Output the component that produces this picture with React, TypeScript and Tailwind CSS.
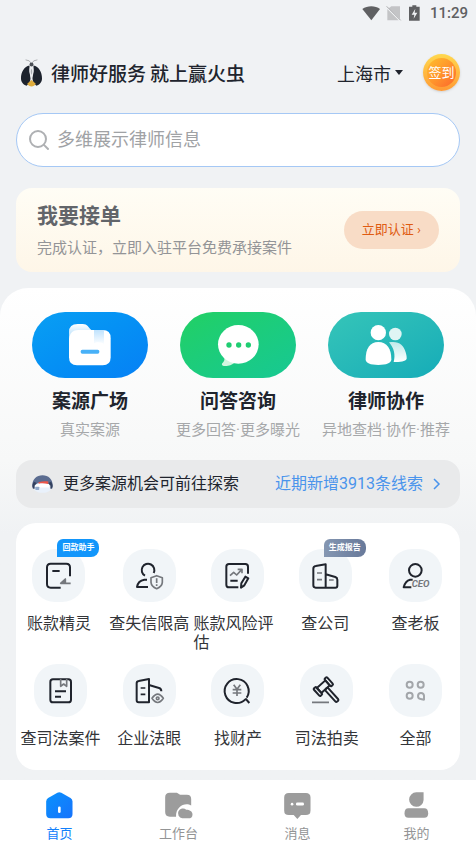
import type { ReactNode } from "react";

const INK = "#20242d";
const GREY = "#75787d";

/* ---------- small drawings ---------- */

function FireflyLogo() {
  return (
    <svg viewBox="0 0 70 90" className="h-[30px] w-[23px] shrink-0" aria-hidden="true">
      <path d="M35 17 28 8 17 5M35 17 42 8 53 5" fill="none" stroke="#8b8d90" strokeWidth="2" />
      <path d="M29 22C13 25 3 42 3 61c0 12 7 19 17 23 7-6 12-13 12-22 0-12-4-20-3-40z" fill="#1d232d" />
      <path d="M41 22c16 3 26 20 26 39 0 12-7 19-17 23-7-6-12-13-12-22 0-12 4-20 3-40z" fill="#1d232d" />
      <path d="M35 22c-7 5-8 16-5 27l5 16 5-16c3-11 2-22-5-27z" fill="#eceef0" />
      <path d="M35 32c-3 5-3 12 0 19 3-7 3-14 0-19z" fill="#a9adb2" />
      <circle cx="35" cy="19" r="6" fill="#4b4f55" />
      <path d="M22 78 35 66l13 12c-2 5-8 8-13 8s-11-3-13-8z" fill="#dfac3c" />
    </svg>
  );
}

function StatusIcons() {
  return (
    <svg viewBox="0 0 180 48" className="h-4 w-[60px]" aria-hidden="true">
      <path d="M1 12C16 1 40 1 54 12L28 46z" fill="#5f6062" />
      <path d="M88 4h26v38L80 10zM76 12l34 34H76z" fill="#c3c4c6" />
      <path d="m74 4 42 42" stroke="#a7a8aa" strokeWidth="3" />
      <path d="M151 1h12v4h10v42h-32V5h10z" fill="#5f6062" />
      <path d="m160 11-11 18h8l-2 12 11-18h-8z" fill="#f0f2f4" />
    </svg>
  );
}

function FolderArt() {
  return (
    <svg viewBox="0 0 348 198" className="h-[66px] w-[116px]" aria-hidden="true">
      <defs>
        <linearGradient id="folderTab" x1="0" y1="0" x2="0" y2="1">
          <stop offset="0" stopColor="#fff" />
          <stop offset="1" stopColor="#a9dafb" />
        </linearGradient>
        <linearGradient id="folderStrip" x1="0" y1="0" x2="0" y2="1">
          <stop offset="0" stopColor="#bfe2fd" />
          <stop offset="1" stopColor="#fff" />
        </linearGradient>
      </defs>
      <path d="M111 80V60q0-24 26-24h15c15 0 17 10 26 18l-20 26z" fill="url(#folderTab)" />
      <path d="M111 80c3-18 12-26 28-26h73q24 0 24 24v58q0 24-24 24h-77q-24 0-24-24z" fill="#fff" />
      <path d="M186 54h30v44c-5-9-22-9-30-4z" fill="url(#folderStrip)" />
      <rect x="146" y="113" width="56" height="12" rx="5" fill="#48b1f8" />
    </svg>
  );
}

function ChatArt() {
  return (
    <svg viewBox="0 0 348 198" className="h-[66px] w-[116px]" aria-hidden="true">
      <path d="M132 135c4 10-2 15-6 20-3 7 9 8 18 6 10-2 17-6 22-12z" fill="#d3f6e0" />
      <ellipse cx="175" cy="97" rx="61" ry="58" fill="#fff" />
      <g fill="#1fcd72">
        <circle cx="147" cy="99" r="8" />
        <circle cx="176" cy="99" r="8" />
        <circle cx="205" cy="99" r="8" />
      </g>
    </svg>
  );
}

function PeopleArt() {
  return (
    <svg viewBox="0 0 348 198" className="h-[66px] w-[116px]" aria-hidden="true">
      <defs>
        <linearGradient id="secondPerson" x1="0" y1="0" x2="0" y2="1">
          <stop offset="0" stopColor="#bfeaea" />
          <stop offset="1" stopColor="#fff" />
        </linearGradient>
      </defs>
      <circle cx="202" cy="66" r="19" fill="#dff5f4" />
      <path d="M183 91c28-5 44 6 50 30 3 10 3 14 3 19-3 8-20 10-39 10 6-21 1-42-14-59z" fill="url(#secondPerson)" />
      <circle cx="151" cy="62" r="23" fill="#fff" />
      <path d="M113 142c0-32 12-52 38-52s39 20 39 52c0 12-15 17-39 17s-38-5-38-17z" fill="#fff" />
    </svg>
  );
}

function Mascot() {
  return (
    <svg viewBox="0 0 64 54" className="h-[18px] w-[21px] shrink-0" aria-hidden="true">
      <path d="M3 42C-4 18 10 0 32 0s36 18 29 42L52 34H12z" fill="#5b6c90" />
      <path d="M1 34c0-6 2-10 5-14l8 4-6 18-5-2zM63 34c0-6-2-10-5-14l-8 4 6 18 5-2z" fill="#33415f" />
      <path d="M8 32c6-8 16-10 24-10s18 2 24 10v14c-6 5-14 8-24 8S14 51 8 46z" fill="#e9f1fb" />
      <path d="M10 30q20-8 42-2v10H10z" fill="#fff" />
      <path d="M20 22c10-4 20-4 30-3l-1 8c-10-2-18-4-29-1z" fill="#ee5548" />
      <rect x="10" y="35" width="12" height="10" rx="2" fill="#91a9cb" />
    </svg>
  );
}

function Tile({ children }: { children: ReactNode }) {
  return (
    <svg
      viewBox="0 0 159 159"
      className="size-[53px] rounded-[23px] bg-[#f1f5f8]"
      fill="none"
      stroke={INK}
      strokeWidth="6"
      strokeLinejoin="round"
      aria-hidden="true"
    >
      {children}
    </svg>
  );
}

/* ---------- data ---------- */

type Feature = { title: string; note: string; pill: string; art: ReactNode };

const features: Feature[] = [
  {
    title: "案源广场",
    note: "真实案源",
    pill: "bg-linear-to-br from-[#0a9ff3] to-[#0780f5]",
    art: <FolderArt />,
  },
  {
    title: "问答咨询",
    note: "更多回答·更多曝光",
    pill: "bg-linear-to-br from-[#22d063] to-[#17c893]",
    art: <ChatArt />,
  },
  {
    title: "律师协作",
    note: "异地查档·协作·推荐",
    pill: "bg-linear-to-br from-[#35c5b8] to-[#14acb8]",
    art: <PeopleArt />,
  },
];

type Tool = { label: string; icon: ReactNode; badge?: string; badgeStyle?: string };

const tools: Tool[] = [
  {
    label: "账款精灵",
    badge: "回款助手",
    badgeStyle: "bg-[#1296fb]",
    icon: (
      <Tile>
        <path d="M114 82V55q0-11-11-11H56q-11 0-11 11v50q0 11 11 11h30" />
        <path d="M61 66h22" />
        <path d="M116 103H86l14-13v13" stroke={GREY} fill={GREY} strokeWidth="5" />
      </Tile>
    ),
  },
  {
    label: "查失信限高",
    icon: (
      <Tile>
        <path d="M66 80a19 19 0 1 1 26-8" />
        <path d="M72 92h-8q-19 3-22 22h33" />
        <path d="m101 80 17 6v14q-1 12-17 19-16-7-17-19V86z" stroke={GREY} strokeWidth="5" />
        <path d="M101 88v14m0 4v5" stroke={GREY} strokeWidth="5" />
      </Tile>
    ),
  },
  {
    label: "账款风险评估",
    icon: (
      <Tile>
        <path d="M111 74V53q0-8-8-8H54q-8 0-8 8v54q0 8 8 8h28" />
        <path d="m57 80 11-10 9 8 15-16M80 61h13v12" stroke={GREY} strokeWidth="5" />
        <path d="M58 95h22" />
        <path d="m91 103 12-20 9 5-12 21-10 7z" strokeWidth="6" />
      </Tile>
    ),
  },
  {
    label: "查公司",
    badge: "生成报告",
    badgeStyle: "bg-linear-to-r from-[#8597b2] to-[#68799a]",
    icon: (
      <Tile>
        <path d="M80 116V46l-30 5q-7 1-7 8v50q0 7 7 7h59q6 0 6-6V92q0-6-6-8l-29-8" />
        <path d="M54 72h15M54 92h15M90 93h14" stroke={GREY} strokeWidth="5" />
      </Tile>
    ),
  },
  {
    label: "查老板",
    icon: (
      <Tile>
        <circle cx="79" cy="64" r="19" />
        <path d="M71 92h-8q-14 3-19 23h23" />
        <text
          x="68"
          y="115"
          fill={GREY}
          stroke="none"
          fontSize="29"
          fontWeight="700"
          fontStyle="italic"
          fontFamily="Roboto, sans-serif"
        >
          CEO
        </text>
      </Tile>
    ),
  },
  {
    label: "查司法案件",
    icon: (
      <Tile>
        <rect x="49" y="46" width="62" height="69" rx="8" />
        <path d="M80 45v22l9-7 9 7V45" stroke={GREY} strokeWidth="5" />
        <path d="M63 82h33M63 98h18" />
      </Tile>
    ),
  },
  {
    label: "企业法眼",
    icon: (
      <Tile>
        <path d="M78 115V45l-31 6q-6 1-6 7v51q0 6 6 6z" />
        <path d="m78 63 30 9q7 2 7 10" />
        <path d="M53 72h14M53 91h14" strokeWidth="5" />
        <path d="M87 103q17-25 34 0-17 25-34 0z" stroke={GREY} strokeWidth="5" />
        <circle cx="104" cy="103" r="4" stroke={GREY} strokeWidth="5" />
      </Tile>
    ),
  },
  {
    label: "找财产",
    icon: (
      <Tile>
        <path d="M103 106a36 36 0 1 1 4-5M103 103l12 14" />
        <path d="m68 62 10 14 10-14M78 76v20M65 77h26M65 87h26" stroke={GREY} strokeWidth="5" />
      </Tile>
    ),
  },
  {
    label: "司法拍卖",
    icon: (
      <Tile>
        <g transform="translate(70 68) rotate(-42)" strokeWidth="6">
          <rect x="-27" y="-15" width="10" height="30" rx="3" />
          <rect x="17" y="-15" width="10" height="30" rx="3" />
          <path d="M-17-10h34v20h-34z" />
          <rect x="-3" y="10" width="11" height="51" rx="4" />
        </g>
        <path d="M36 115h51" stroke={GREY} strokeWidth="5" />
      </Tile>
    ),
  },
  {
    label: "全部",
    icon: (
      <Tile>
        <g stroke="#a3a6aa" strokeWidth="6">
          <circle cx="62" cy="62" r="9" />
          <circle cx="95" cy="62" r="9" />
          <circle cx="62" cy="95" r="9" />
          <path d="M105 107V95a9 9 0 1 0-10 10z" />
        </g>
      </Tile>
    ),
  },
];

const tabs: { label: string; icon: ReactNode }[] = [
  {
    label: "首页",
    icon: (
      <>
        <defs>
          <linearGradient id="homeFill" x1="0" y1="0" x2="1" y2="1">
            <stop offset="0" stopColor="#0a92fd" />
            <stop offset="1" stopColor="#1673fc" />
          </linearGradient>
        </defs>
        <path d="M34 2q6-3 12 0l28 16q6 4 6 11v38q0 13-13 13H13Q0 80 0 67V29q0-7 6-11z" fill="url(#homeFill)" />
        <rect x="36" y="44" width="8" height="20" rx="4" fill="#fff" />
      </>
    ),
  },
  {
    label: "工作台",
    icon: (
      <>
        <path d="M14 2h18c9 0 8 6 17 6h17q13 0 13 13v20C62 30 32 42 33 75H14Q0 75 0 61V16Q0 2 14 2z" />
        <path d="M52 80a15 15 0 1 1 12-26c10 0 19 5 19 14q0 12-13 12z" />
      </>
    ),
  },
  {
    label: "消息",
    icon: (
      <>
        <path d="M14 3h52q14 0 14 14v39q0 14-14 14H51L40 82 29 70H14Q0 70 0 56V17Q0 3 14 3z" />
        <circle cx="24" cy="37" r="4" fill="#fff" />
        <rect x="36" y="32" width="24" height="9" rx="4" fill="#fff" />
      </>
    ),
  },
  {
    label: "我的",
    icon: (
      <>
        <path d="M62 1v23a22 22 0 1 1-22-23z" />
        <path d="M16 49h48q12 0 12 16 0 13-12 13H16Q4 78 4 65q0-16 12-16z" />
      </>
    ),
  },
];

/* ---------- page ---------- */

export default function App() {
  return (
    <div
      lang="zh-CN"
      className="flex min-h-screen flex-col bg-[#f0f2f4] font-['Roboto','Noto_Sans_CJK_SC',sans-serif] text-[#20242d]"
    >
      <div className="flex h-[26px] items-center justify-end gap-2 pr-2 text-[15px] font-medium text-[#5f6062]">
        <StatusIcons />
        <span>11:29</span>
      </div>

      <header className="flex items-center px-4 pt-7 pb-[22px]">
        <div className="flex items-center gap-2 pl-1">
          <FireflyLogo />
          <h1 className="flex gap-1 pt-1 text-[19px] leading-6 font-medium">
            <span>律师好服务</span>
            <span>就上赢火虫</span>
          </h1>
        </div>
        <button type="button" className="ml-auto flex items-center gap-1 pt-1 text-[18px] leading-6">
          上海市
          <svg viewBox="0 0 8 5" className="mb-1 h-[5px] w-2" aria-hidden="true">
            <path d="M0 0h8L4 5z" fill={INK} />
          </svg>
        </button>
        <button
          type="button"
          className="ml-5 size-[37px] rounded-full bg-linear-to-b from-[#ffd84e] to-[#ff9a35] p-1 shadow-sm"
        >
          <span className="flex size-full items-center justify-center rounded-full bg-linear-to-br from-[#ffc02c] to-[#fb642b] text-[13px] whitespace-nowrap text-white">
            签到
          </span>
        </button>
      </header>

      <label className="mx-4 flex h-[54px] items-center gap-2 rounded-full border border-[#a5c8f5] bg-white px-3">
        <svg viewBox="0 0 60 60" className="size-5 shrink-0" fill="none" stroke="#aeb0b3" strokeWidth="6" aria-hidden="true">
          <circle cx="27" cy="27" r="24" />
          <path d="m44 44 15 15" />
        </svg>
        <input
          type="search"
          aria-label="搜索"
          placeholder="多维展示律师信息"
          className="min-w-0 flex-1 bg-transparent text-[18px] leading-6 outline-none placeholder:text-[#a0a2a5]"
        />
      </label>

      <section className="mx-4 mt-[21px] flex h-[84px] items-center justify-between rounded-2xl bg-linear-to-b from-[#fffdf5] to-[#fef6e8] px-[21px]">
        <div>
          <h2 className="text-[21px] leading-7 font-bold text-[#62656a]">我要接单</h2>
          <p className="mt-2 text-[15px] leading-5 text-[#939497]">完成认证，立即入驻平台免费承接案件</p>
        </div>
        <button
          type="button"
          className="h-[38px] shrink-0 rounded-full bg-[#f8dcc6] px-[18px] text-[13px] text-[#df5b12]"
        >
          立即认证 ›
        </button>
      </section>

      <main className="mt-4 rounded-t-[28px] bg-linear-to-b from-white via-[#f7f8f8] via-35% to-[#f0f2f4] to-50% px-4 pt-6 pb-[10px]">
        <div className="grid grid-cols-3">
          {features.map((f) => (
            <a key={f.title} href="#" className="flex flex-col items-center whitespace-nowrap">
              <span className={`flex h-[66px] w-[116px] items-center justify-center rounded-full ${f.pill}`}>
                {f.art}
              </span>
              <span className="mt-[10px] text-[19px] leading-7 font-bold">{f.title}</span>
              <span className="mt-1 text-[15px] leading-5 text-[#a6a8aa]">{f.note}</span>
            </a>
          ))}
        </div>

        <a href="#" className="mt-5 flex h-12 items-center rounded-2xl bg-[#e9eaeb] px-4 text-[16px]">
          <Mascot />
          <span className="ml-[10px]">更多案源机会可前往探索</span>
          <span className="ml-auto text-[#4a94ec]">近期新增3913条线索</span>
          <svg viewBox="0 0 8 12" className="mr-[3px] ml-[10px] h-3 w-2" fill="none" stroke="#4a94ec" strokeWidth="1.5" aria-hidden="true">
            <path d="m1 1 5 5-5 5" />
          </svg>
        </a>

        <div className="mt-[15px] grid grid-cols-5 gap-y-3 rounded-[20px] bg-white pt-[26px] pb-[22px]">
          {tools.map((tool) => (
            <a
              key={tool.label}
              href="#"
              className={`flex flex-col items-center ${tool.badge ? "pr-[3px]" : ""}`}
            >
              <span className="relative">
                {tool.icon}
                {tool.badge && (
                  <span
                    className={`absolute -top-[10px] left-[25px] rounded-tl-md rounded-r-lg px-[5px] text-[8px] leading-[18px] font-bold whitespace-nowrap text-white ${tool.badgeStyle}`}
                  >
                    {tool.badge}
                  </span>
                )}
              </span>
              <span className="mt-3 text-[16px] leading-[19px] text-[#333539]">{tool.label}</span>
            </a>
          ))}
        </div>
      </main>

      <nav className="mt-auto grid grid-cols-4 bg-white pt-3 pb-[3px]">
        {tabs.map((tab, i) => (
          <a
            key={tab.label}
            href="#"
            aria-current={i === 0 ? "page" : undefined}
            className={`flex flex-col items-center gap-[6px] text-[13px] leading-[18px] ${
              i === 0 ? "text-[#1280fb]" : "text-[#939495]"
            }`}
          >
            <svg viewBox="0 0 84 82" className="h-[27px] w-7" fill="#9c9c9c" aria-hidden="true">
              {tab.icon}
            </svg>
            {tab.label}
          </a>
        ))}
      </nav>
    </div>
  );
}
